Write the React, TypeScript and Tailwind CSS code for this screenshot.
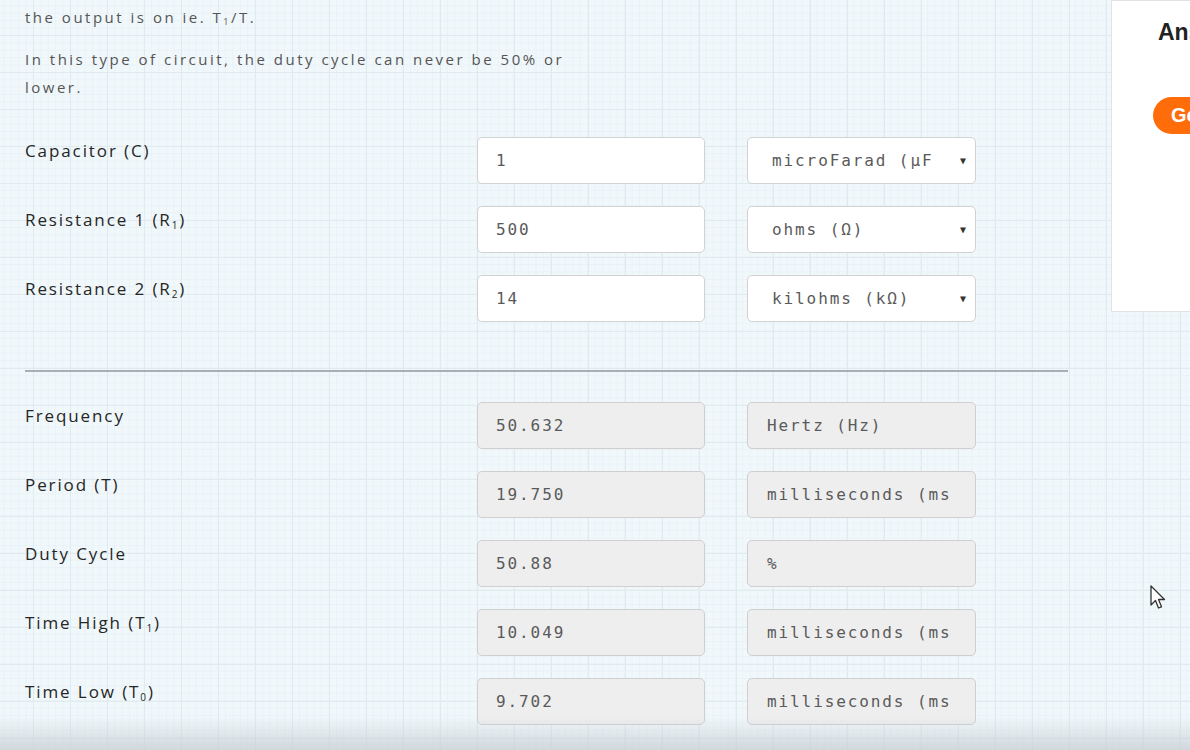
import React from "react";

type Row = { label: React.ReactNode; value: string; unit: string; select?: boolean };

const inputs: Row[] = [
  { label: <>Capacitor (C)</>, value: "1", unit: "microFarad (µF", select: true },
  { label: <>Resistance 1 (R<sub className="text-[10px]">1</sub>)</>, value: "500", unit: "ohms (Ω)", select: true },
  { label: <>Resistance 2 (R<sub className="text-[10px]">2</sub>)</>, value: "14", unit: "kilohms (kΩ)", select: true },
];

const outputs: Row[] = [
  { label: <>Frequency</>, value: "50.632", unit: "Hertz (Hz)" },
  { label: <>Period (T)</>, value: "19.750", unit: "milliseconds (ms" },
  { label: <>Duty Cycle</>, value: "50.88", unit: "%" },
  { label: <>Time High (T<sub className="text-[10px]">1</sub>)</>, value: "10.049", unit: "milliseconds (ms" },
  { label: <>Time Low (T<sub className="text-[10px]">0</sub>)</>, value: "9.702", unit: "milliseconds (ms" },
];

function FormRow({ row, out }: { row: Row; out?: boolean }) {
  const box = out
    ? "bg-[#eeeeee] border border-[#cfcfcf]"
    : "bg-white border border-[#d2d2d2]";
  return (
    <div className="flex items-start">
      <div className="w-[452px] pt-[1px] leading-[26px] text-[17px] tracking-[1.9px] text-[#262626] font-['Open_Sans',sans-serif]">
        {row.label}
      </div>
      <div
        className={`w-[228px] h-[47px] rounded-[5px] ${box} flex items-center pl-[18px] font-['DejaVu_Sans_Mono',monospace] text-[16px] tracking-[1.9px] text-[#5a5a5a]`}
      >
        {row.value}
      </div>
      <div
        className={`ml-[42px] w-[229px] h-[47px] rounded-[5px] ${box} flex items-center ${row.select ? "pl-[24px]" : "pl-[19px]"} pr-[9px] font-['DejaVu_Sans_Mono',monospace] text-[16px] tracking-[1.9px] text-[#5a5a5a] overflow-hidden whitespace-nowrap`}
      >
        <span className="flex-1 overflow-hidden">{row.unit}</span>
        {row.select && <span className="text-[10px] text-[#333] tracking-normal ml-1">▼</span>}
      </div>
    </div>
  );
}

export default function App() {
  return (
    <div className="relative w-[1190px] h-[750px] overflow-hidden bg-[#f1f8fb] [background-image:linear-gradient(#e0ebf0_1px,transparent_1px),linear-gradient(90deg,#e0ebf0_1px,transparent_1px),linear-gradient(#e9f2f6_1px,transparent_1px),linear-gradient(90deg,#e9f2f6_1px,transparent_1px)] [background-size:37px_37px,37px_37px,7.4px_7.4px,7.4px_7.4px] [background-position:-4px_-2px]">
      <div className="flex items-start">
        <div className="w-[1111px] shrink-0 pl-[25px] pr-[43px]">
          <div className="text-[15px] leading-[28px] tracking-[2.5px] text-[#555] font-['Open_Sans',sans-serif] whitespace-nowrap">
            <p className="mt-[-25px]">The duty cycle is the percentage of the period that</p>
            <p>the output is on ie. T<sub className="text-[9px]">1</sub>/T.</p>
            <p className="mt-[14px]">In this type of circuit, the duty cycle can never be 50% or</p>
            <p>lower.</p>
          </div>
          <div className="mt-[36px] flex flex-col gap-[22px]">
            {inputs.map((r, i) => (
              <FormRow key={i} row={r} />
            ))}
          </div>
          <div className="mt-[48px] h-[2px] bg-[#a9b0b3]" />
          <div className="mt-[30px] flex flex-col gap-[22px]">
            {outputs.map((r, i) => (
              <FormRow key={i} row={r} out />
            ))}
          </div>
        </div>
        <div className="w-[300px] h-[312px] shrink-0 bg-white border border-[#dfe3e5] pl-[46px] pt-[14px]">
          <div className="font-['Liberation_Sans',Arial,sans-serif] font-bold text-[23px] text-[#222] whitespace-nowrap">
            Answer
          </div>
          <div className="mt-[47px] -ml-[5px] inline-flex items-center h-[37px] px-[18px] rounded-full bg-[#ff6c0a] text-white font-['Liberation_Sans',Arial,sans-serif] font-bold text-[20px] whitespace-nowrap">
            Get Started
          </div>
        </div>
      </div>

      {/* mouse cursor */}
      <svg className="absolute left-[1150px] top-[585px]" width="18" height="26" viewBox="0 0 18 26">
        <path
          d="M1 1 L1 20 L5.5 15.5 L8.5 23 L11.5 21.8 L8.5 14.5 L14.5 14.5 Z"
          fill="white"
          stroke="#333"
          strokeWidth="1.3"
          strokeLinejoin="round"
        />
      </svg>

      {/* bottom shading */}
      <div className="absolute left-0 right-0 bottom-0 h-[34px] bg-gradient-to-b from-transparent to-[#c3cbcf]/70" />
    </div>
  );
}
